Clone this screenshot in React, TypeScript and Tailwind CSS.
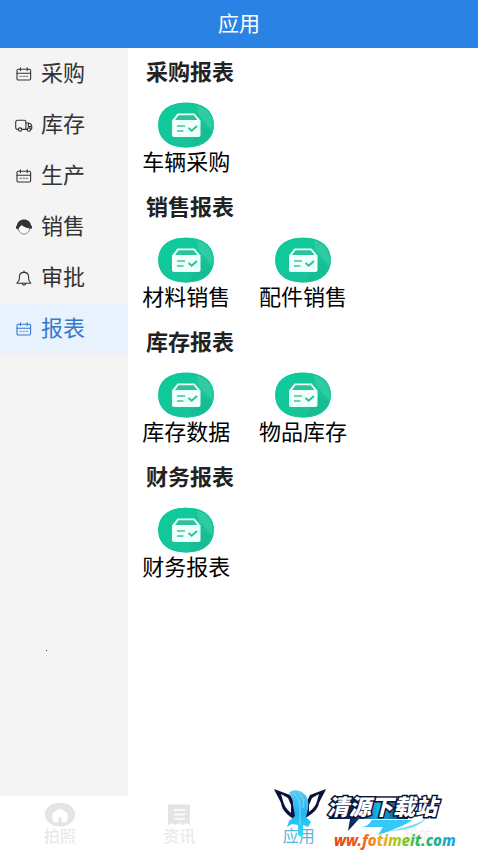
import { useState } from "react";

type MenuIcon = "calendar" | "truck" | "face" | "bell";

interface MenuItem {
  label: string;
  icon: MenuIcon;
}

const MENU: MenuItem[] = [
  { label: "采购", icon: "calendar" },
  { label: "库存", icon: "truck" },
  { label: "生产", icon: "calendar" },
  { label: "销售", icon: "face" },
  { label: "审批", icon: "bell" },
  { label: "报表", icon: "calendar" },
];

const SECTIONS = [
  { title: "采购报表", apps: ["车辆采购"] },
  { title: "销售报表", apps: ["材料销售", "配件销售"] },
  { title: "库存报表", apps: ["库存数据", "物品库存"] },
  { title: "财务报表", apps: ["财务报表"] },
];

const TABS = [
  { label: "拍照", color: "text-[#e6e6e6]" },
  { label: "资讯", color: "text-[#e6e6e6]" },
  { label: "应用", color: "text-[#58b4d8]" },
  { label: "我的", color: "text-[#f0f0f0]" },
];

function SideIcon({ name }: { name: MenuIcon }) {
  return (
    <svg
      className="h-4 w-[18px] shrink-0"
      viewBox="0 0 18 16"
      fill="none"
      stroke="currentColor"
      strokeWidth="1.1"
      strokeLinecap="round"
      strokeLinejoin="round"
      aria-hidden="true"
    >
      {name === "calendar" && (
        <>
          <rect x="2" y="3.2" width="13.6" height="10.8" rx="1.2" />
          <path d="M2 7.200h13.600M5.400 1.800v2.800M12.200 1.800v2.800" />
          <path d="M5 10.400h1.400M8.200 10.400h1.400M11.200 10.400h1.400" opacity="0.6" />
        </>
      )}
      {name === "truck" && (
        <>
          <path d="M3.200 12.400H2.400A1.700 1.700 0 0 1 .7 10.700V5A1.700 1.700 0 0 1 2.400 3.300h6.800A1.700 1.700 0 0 1 10.900 5v7.400H7" />
          <path d="M10.900 6h2.500c1.800 0 3.400 1.900 3.400 3.700v1.500c0 .8-.4 1.200-1 1.200M13.400 6.200v3.400h3.200M10.900 12.400h1.200" />
          <circle cx="5.100" cy="12.600" r="1.700" />
          <circle cx="13.900" cy="12.600" r="1.700" />
        </>
      )}
      {name === "face" && (
        <>
          <path d="M3 8.500c.3 3.900 2.800 6.500 6 6.500s5.700-2.600 6-6.500" fill="#fff" strokeWidth="0.8" opacity="0.7" />
          <path
            d="M9 .6C5.200.6 2.500 3 2 6.200c-1.100.6-1.500 2.500-.6 3.500.8.800 1.900.5 2.200-.3.600-1.100 2-1.900 3-3.400 2 2 5.200 3 7.800 3.300.4.800 1.400 1.100 2.200.3.900-1 .5-2.800-.6-3.400C15.500 3 12.800.6 9 .6z"
            fill="currentColor"
            stroke="none"
          />
        </>
      )}
      {name === "bell" && (
        <>
          <path d="M1.800 13.200h14c-1.500-1.300-2.200-2.500-2.200-4.600V7C13.600 4.200 11.600 2.400 9 2.400S4.400 4.200 4.400 7v1.600c0 2.100-1.100 3.300-2.600 4.600z" />
          <path d="M9 1v1.200M7.200 13.400c.2 1.200.9 1.700 1.800 1.700s1.600-.5 1.800-1.700" />
        </>
      )}
    </svg>
  );
}

function AppIcon() {
  return (
    <svg className="h-[46px] w-14" viewBox="0 0 56 46" aria-hidden="true">
      <defs>
        <linearGradient id="appFill" x1="0" y1="0" x2="1" y2="1">
          <stop offset="0" stopColor="#0bcd9c" />
          <stop offset="1" stopColor="#1fbf98" />
        </linearGradient>
        <clipPath id="appClip">
          <path d="M28 .8C44 .8 55.700 8 55.700 23S44 45.400 28 45.400.3 38 .3 23 12 .8 28 .8z" />
        </clipPath>
      </defs>
      <g clipPath="url(#appClip)">
        <path d="M0 0h56v46H0z" fill="url(#appFill)" />
        <path d="M38 0h18v30L41 14z" fill="#3acfa8" opacity="0.7" />
        <path d="M42 24l14 6v16H30z" fill="#12b48a" opacity="0.4" />
        <path
          d="M28 .8C44 .8 55.700 8 55.700 23S44 45.400 28 45.400.3 38 .3 23 12 .8 28 .8z"
          fill="none"
          stroke="#0fc798"
          strokeWidth="2.500"
        />
      </g>
      <path d="M19.500 11.500h17l6 7v14.500a2 2 0 0 1-2 2H16a2 2 0 0 1-2-2V18.500z" fill="#effffa" />
      <path d="M20.500 13.300h15.200l3.800 4.800H17z" fill="#2cc29b" />
      <path d="M19 24h8M19 29h6.500" stroke="#3cc6a2" strokeWidth="1.700" />
      <path d="M30.500 26l3.200 2.800 5.300-4.800" fill="none" stroke="#2cc09a" strokeWidth="1.900" />
    </svg>
  );
}

function TabIcon({ index }: { index: number }) {
  return (
    <svg className="h-6 w-8" viewBox="0 0 32 24" fill="#e4e4e4" aria-hidden="true">
      {index === 0 && (
        <>
          <ellipse cx="16" cy="11.500" rx="15" ry="12" />
          <path d="M16 5.500l7.500 4.500v7l-2 2.500h-11l-2-2.500v-7z" fill="#fff" />
          <path d="M16 13.500l1.500 1.500.5 4.500h3l-2 2.500h-6l-2-2.500h3l.5-4.500z" />
        </>
      )}
      {index === 1 && (
        <>
          <path d="M5 1.500h22v20.500l-4-2-3.500 2-3.500-2-3.500 2L9 20l-4 2z" />
          <path d="M11 7h11M11 11.500h11M11 16h11" stroke="#fff" strokeWidth="1.500" />
        </>
      )}
    </svg>
  );
}

function SiteBadge() {
  return (
    <svg
      className="pointer-events-none absolute right-5 bottom-0 h-[66px] w-[184px]"
      viewBox="0 0 184 66"
      role="img"
      aria-label="清源下载站"
    >
      <defs>
        <linearGradient id="wing" x1="0" y1="0" x2="0" y2="1">
          <stop offset="0" stopColor="#5cc8f2" />
          <stop offset="0.500" stopColor="#22b4f4" />
          <stop offset="1" stopColor="#30e0f8" />
        </linearGradient>
        <linearGradient id="plate" x1="0" y1="0" x2="1" y2="0">
          <stop offset="0" stopColor="#0a1238" />
          <stop offset="0.300" stopColor="#0b2b66" />
          <stop offset="0.600" stopColor="#18b8ea" />
          <stop offset="1" stopColor="#0a1238" />
        </linearGradient>
        <linearGradient id="rainbow" x1="0" y1="0" x2="1" y2="0">
          <stop offset="0" stopColor="#e8431c" />
          <stop offset="0.220" stopColor="#ec5a1c" />
          <stop offset="0.380" stopColor="#f2a81c" />
          <stop offset="0.520" stopColor="#a8cc1e" />
          <stop offset="0.700" stopColor="#2fb84a" />
          <stop offset="0.850" stopColor="#1eae9c" />
          <stop offset="1" stopColor="#22a2ee" />
        </linearGradient>
      </defs>

      <path d="M0 5l16 6 5 8v17C13 31 8 26 7 19 5 14 2 10 0 5z" fill="#0a1238" />
      <path d="M7 10l7 4 3 7v8C12 25 10 21 9 17z" fill="#fff" />
      <path d="M52 5l-16 6-4 8-1 15c8-4 13-9 14-15 2-5 5-9 7-14z" fill="#0a1238" />
      <path d="M45 10l-7 4-3 7v7c5-4 7-7 8-11z" fill="#fff" />
      <path
        d="M15 9c4-4 10-3 14 0 5 3 6 9 5 16l-2 8 5 5-3 5-5-2v9l-2 3-3-2V41l-6-1-5 3 2-6 6-5-2-11c0-5-1-9-4-12z"
        fill="url(#wing)"
      />
      <path d="M18 9c5 2 8 7 8 14v18M25 9c4 4 5 8 4 15" fill="none" stroke="#7cdcfa" strokeWidth="1" />

      <path d="M74 15h64l-4 20H85L74 47l2-12H54z" fill="url(#plate)" />
      <path d="M98 36h40c-6 5-13 7-22 11l-12 4 5-8H88c6-1 8-4 10-7z" fill="#35c9f5" />
      <path d="M152 34c-6 6-20 9-36 13 18-1 31-5 36-13z" fill="#6bdcf6" />
      <text
        x="53"
        y="31"
        fontFamily="'Noto Sans CJK SC', sans-serif"
        fontSize="22"
        fontWeight="900"
        fontStyle="italic"
        fill="#fff"
        stroke="#0a1238"
        strokeWidth="3"
        strokeLinejoin="miter"
        paintOrder="stroke"
      >
        清源下载站
      </text>
      <text
        x="60"
        y="62"
        fontFamily="'Noto Sans', sans-serif"
        fontSize="15"
        fontWeight="800"
        fontStyle="italic"
        fill="url(#rainbow)"
      >
        ww.fotimeit.com
      </text>
    </svg>
  );
}

export default function App() {
  const [active, setActive] = useState("报表");

  return (
    <div className="flex min-h-screen flex-col bg-white font-['Noto_Sans_CJK_SC',sans-serif] text-[#222]">
      <header className="flex h-12 items-center justify-center bg-[#2a82e4] pb-1 text-white">
        <h1 className="text-[21px] leading-none">应用</h1>
      </header>

      <div className="flex flex-1">
        <nav className="w-32 shrink-0 bg-[#f4f4f4]">
          {MENU.map((item) => (
            <button
              key={item.label}
              type="button"
              onClick={() => setActive(item.label)}
              className={`flex h-[51px] w-full items-center gap-2 pl-[15px] text-[22px] leading-none ${
                active === item.label ? "bg-[#e8f3fe] text-[#3579cf]" : "text-[#333]"
              }`}
            >
              <SideIcon name={item.icon} />
              <span className="pb-1.5">{item.label}</span>
            </button>
          ))}
          <span className="mt-[296px] ml-[46px] block size-px bg-[#5a1a1a]" />
        </nav>

        <main className="flex-1">
          {SECTIONS.map((section) => (
            <section key={section.title} className="h-[135px] pt-1.5">
              <h2 className="pl-[18px] text-[22px] leading-8 font-bold">{section.title}</h2>
              <div className="mt-4 grid grid-cols-3">
                {section.apps.map((app) => (
                  <button key={app} type="button" className="flex flex-col items-center">
                    <AppIcon />
                    <span className="text-[22px] leading-6 text-black">{app}</span>
                  </button>
                ))}
              </div>
            </section>
          ))}
        </main>
      </div>

      <footer className="relative">
        <nav className="grid h-[54px] grid-cols-4">
          {TABS.map((tab, i) => (
            <button
              key={tab.label}
              type="button"
              className={`flex flex-col items-center pt-[7px] text-base leading-4 ${tab.color}`}
            >
              <TabIcon index={i} />
              <span>{tab.label}</span>
            </button>
          ))}
        </nav>
        <SiteBadge />
      </footer>
    </div>
  );
}
